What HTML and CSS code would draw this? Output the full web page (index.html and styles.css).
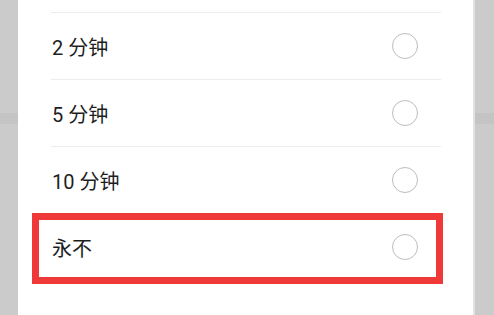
FILE: index.html
```html
<!DOCTYPE html>
<html lang="zh-CN">
<head>
<meta charset="utf-8">
<link rel="stylesheet" href="styles.css">
</head>
<body>
<div class="screen">
  <div class="sheet">
    <ul class="options">
      <li class="option"><span class="label">2 分钟</span><span class="radio"></span></li>
      <li class="option"><span class="label">5 分钟</span><span class="radio"></span></li>
      <li class="option"><span class="label">10 分钟</span><span class="radio"></span></li>
      <li class="option"><span class="label">永不</span><span class="radio"></span></li>
    </ul>
    <div class="highlight"></div>
  </div>
</div>
</body>
</html>
```

FILE: styles.css
```css
html, body {
  margin: 0;
  padding: 0;
}
body {
  width: 494px;
  height: 315px;
  overflow: hidden;
  background: linear-gradient(to bottom, #cbcbcb 0, #cbcbcb 113px, #c4c4c4 113px, #c4c4c4 124px, #cbcbcb 124px);
  font-family: Roboto, "Noto Sans CJK SC", sans-serif;
}
.screen {
  display: flex;
  height: 315px;
  padding-left: 18px;
}
.sheet {
  position: relative;
  width: 455px;
  height: 315px;
  background: #ffffff;
  border-right: 2px solid #e2e2e2;
}
.options {
  list-style: none;
  margin: 0;
  padding: 12px 32px 0 33px;
}
.option {
  display: flex;
  align-items: center;
  justify-content: space-between;
  height: 66px;
  border-top: 1px solid #ececec;
  padding: 0 23px 0 1px;
}
.label {
  font-size: 20px;
  color: #1e1e1e;
  letter-spacing: 0;
}
.radio {
  width: 24px;
  height: 24px;
  border: 1.6px solid #bdbdbd;
  border-radius: 50%;
}
.highlight {
  position: absolute;
  left: 14px;
  top: 213px;
  width: 397px;
  height: 57px;
  border: 7px solid #ef3838;
}
```
